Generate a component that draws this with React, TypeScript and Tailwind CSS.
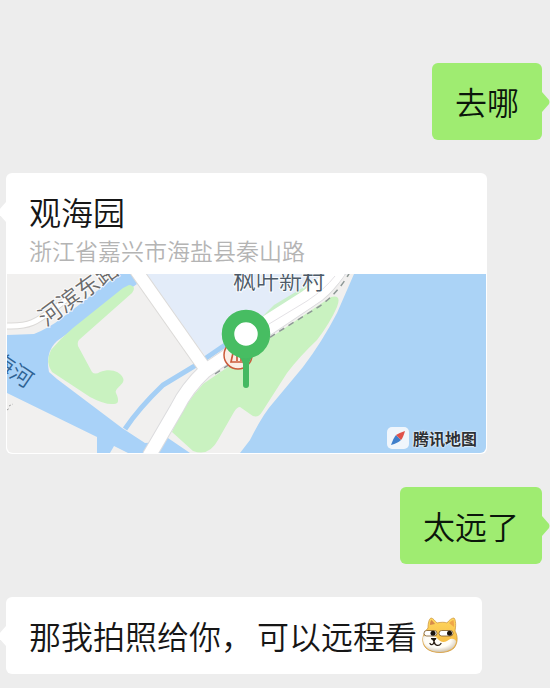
import React from "react";

const DogeIcon = () => (
  <svg className="h-[38px] w-[38px] shrink-0" viewBox="0 0 38 38" role="img" aria-label="doge">
    <defs>
      <linearGradient id="fur" x1="0" y1="0" x2="0" y2="1">
        <stop offset="0" stopColor="#ffd75e" />
        <stop offset="1" stopColor="#f2b23c" />
      </linearGradient>
      <radialGradient id="face" cx="0.45" cy="0.35" r="0.65">
        <stop offset="0.6" stopColor="#fffdf7" />
        <stop offset="1" stopColor="#cfc4b2" />
      </radialGradient>
    </defs>
    <path
      d="M7 11 C7 6 8 2 10 1 C12 1 14 4 16 6 C20 5 24 5 26 6 C28 3 31 1 33 1 C35 3 35 9 34 14 C37 19 37 26 33 31 C27 37 11 37 5 31 C0 26 1 17 7 11Z"
      fill="url(#fur)"
      stroke="#cf9a45"
      strokeWidth="0.8"
    />
    <path d="M9 8 C9 5 10 3 10.500 3 C12 4 13 6 14 7Z" fill="#d68a4a" />
    <path d="M28 6 C30 4 32 3 32.500 3 C33 5 33 8 33 10Z" fill="#f0a64a" />
    <path
      d="M2 20 C6 15 12 19 15 20 C19 25 22 26 26 24 C31 20 34 22 35 24 C35 29 30 35 19 35 C8 35 1 29 2 20Z"
      fill="url(#face)"
    />
    <rect x="3" y="13.500" width="13" height="5.500" rx="2.700" fill="#fff" stroke="#7b5726" strokeWidth="0.8" />
    <rect x="18" y="13.500" width="14" height="5.500" rx="2.700" fill="#fff" stroke="#7b5726" strokeWidth="0.8" />
    <circle cx="12" cy="16.300" r="2.500" fill="#19120c" />
    <circle cx="28.500" cy="16.300" r="2.500" fill="#19120c" />
    <path d="M10 21.500 H15 L13 24Z" fill="#19120c" stroke="#19120c" strokeLinejoin="round" />
    <path
      d="M13 24 C13 28 10 28.500 9 26.500 M13 24.500 C14 29 18 29.500 20 26.500"
      fill="none"
      stroke="#2a1e14"
      strokeWidth="1.300"
      strokeLinecap="round"
    />
  </svg>
);

const MapView = () => (
  <svg
    className="block h-[179px] w-full rounded-b-md bg-[#f1f0ef]"
    viewBox="0 0 479 179"
    preserveAspectRatio="xMidYMid slice"
    fontFamily="'Noto Sans CJK SC', sans-serif"
    role="img"
    aria-label="地图"
  >
    {/* blocks and water */}
    <path d="M134 0 L200 84 L216 69 L340 0Z" fill="#e3ecf9" />
    <path d="M254 44 L267 31 L312 4 L320 10 L264 50Z" fill="#c9efc9" />
    <path
      d="M0 61 L27 60 Q42 54 55 44 L112 0 H124 L130 10 L50 67 Q38 78 42 98 L50 105 L115 154 L138 169 L153 168 L158 162 L183 179 H90 V163 L0 119Z"
      fill="#a9d2f8"
    />
    <path d="M103 179 L107 172 L121 179Z" fill="#f1f0ef" />
    <path d="M347 0 L330 39 Q315 68 296 93 L266 129 Q256 140 243 166 L233 179 H479 V0Z" fill="#abd3f6" />
    <path d="M118 155 Q132 134 156 111 L186 93 L218 71" fill="none" stroke="#a5cff5" strokeWidth="5" />

    {/* parks */}
    <path
      d="M122 11 Q130 12 125 19 L73 65 Q70 67 71 72 L85 98 Q88 101 93 98 C103 94 113 97 116 104 C119 110 107 114 109 119 Q114 130 107 130 Q98 131 83 123 L45 98 Q38 88 44 76 Q54 64 66 54 L116 14Z"
      fill="#c9f2c0"
    />
    <path
      d="M165 158 Q174 134 196 110 L266 62 L324 23 Q335 20 330 33 Q323 49 310 66 Q293 82 280 99 L255 138 Q250 146 243 140 L233 133 Q230 133 227 138 L211 166 Q202 183 186 177Z"
      fill="#c9f2c0"
    />

    {/* roads */}
    <g fill="none" strokeLinejoin="round">
      <path d="M0 52 C26 53 30 47 60 25" stroke="#dcdad8" strokeWidth="7" />
      <path d="M128 -5 L197 93" stroke="#dcdad8" strokeWidth="14" />
      <path d="M142 182 L170 134 Q180 114 198 97 L260 55 L312 20 Q322 12 334 -6" stroke="#dcdcde" strokeWidth="15" />
      <path d="M0 52 C26 53 30 47 60 25" stroke="#fff" strokeWidth="5" />
      <path d="M128 -5 L197 93" stroke="#fff" strokeWidth="12" />
      <path d="M142 182 L170 134 Q180 114 198 97 L260 55 L312 20 Q322 12 334 -6" stroke="#fff" strokeWidth="13" />
      <path d="M256 53 L300 25 Q318 13 330 -4" stroke="#fff" strokeWidth="18" />
      <path d="M262 50 L300 27 Q318 15 328 2" stroke="#e4e2e6" strokeWidth="1" />
      <path d="M208 100 L268 60 L313 32 Q332 18 343 -2" stroke="#8e9896" strokeWidth="1.500" strokeDasharray="6 5" />
    </g>

    {/* labels */}
    <g stroke="#fff" strokeOpacity="0.8" strokeWidth="2" paintOrder="stroke" fontSize="23">
      <text transform="translate(39 53) rotate(-36)" fill="#6b6b6b">
        河滨东路
      </text>
      <text x="226" y="15" fill="#4d5a68">
        枫叶新村
      </text>
    </g>
    <text transform="translate(-17 90) rotate(34)" fontSize="22" fill="#2f6293">
      海河
    </text>
    <path d="M0 136 L3 134 M2 132 L6 130" stroke="#9a9a9a" strokeWidth="1" strokeDasharray="2 2" />

    {/* hot spring */}
    <circle cx="231" cy="81" r="14" fill="#fbeee6" stroke="#cb5a3a" strokeWidth="1.500" />
    <path d="M226 79 L224 88 H240 L238 79 M230 79 V87 M234 79 V87" fill="none" stroke="#cb5a3a" strokeWidth="1.700" />

    {/* pin */}
    <path d="M239 80 V111" stroke="#44b961" strokeWidth="6" strokeLinecap="round" />
    <path d="M228 80 Q235 84 236 90 H242 Q243 84 250 80Z" fill="#44b961" />
    <circle cx="239" cy="60" r="18" fill="#fff" stroke="#47bd62" strokeWidth="12.500" />
  </svg>
);

const TencentBadge = () => (
  <div className="absolute right-2.5 bottom-1 flex items-center gap-1">
    <svg className="h-[22px] w-[22px]" viewBox="0 0 22 22" aria-hidden="true">
      <rect width="22" height="22" rx="5" fill="#f0f6fc" />
      <path d="M4 18 Q7 10 9 8 L14 13 Q11 16 4 18Z" fill="#3f7fcb" />
      <path d="M18 4 Q16 11 14 13 L9 8 Q12 6 18 4Z" fill="#e0524a" />
    </svg>
    <span className="text-base leading-6 font-bold text-[#2d3136] [text-shadow:0_0_2px_#fff,0_0_2px_#fff]">
      腾讯地图
    </span>
  </div>
);

const LeftTail = () => (
  <svg className="absolute top-[27px] -left-2 h-6 w-2" viewBox="0 0 8 24" aria-hidden="true">
    <path d="M8 2 L1 10 Q0 12 1 14 L8 22Z" fill="#fff" />
  </svg>
);

const RightTail = () => (
  <svg className="absolute top-[27px] -right-2 h-6 w-2" viewBox="0 0 8 24" aria-hidden="true">
    <path d="M0 2 L7 10 Q8 12 7 14 L0 22Z" fill="#9fec71" />
  </svg>
);

const SentMessage = ({ text }: { text: string }) => (
  <div className="relative self-end rounded-md bg-[#9fec71] px-[23px] py-4 text-[32px] leading-[45px] text-[#0b160b]">
    {text}
    <RightTail />
  </div>
);

const App = () => {
  return (
    <main className="flex min-h-screen flex-col items-start gap-[33px] overflow-hidden bg-[#ededed] pt-[63px] pr-2 pb-3 pl-1.5 font-['Noto_Sans_CJK_SC',sans-serif] font-[350]">
      <SentMessage text="去哪" />

      <div className="relative w-full max-w-[481px] rounded-md bg-white">
        <LeftTail />
        <div className="px-[23px] pt-4 pb-[7px]">
          <h2 className="text-[32px] leading-[45px] text-[#161616]">观海园</h2>
          <p className="text-[23px] leading-8 text-[#b4b4b4]">浙江省嘉兴市海盐县秦山路</p>
        </div>
        <div className="relative p-px">
          <MapView />
          <TencentBadge />
        </div>
      </div>

      <SentMessage text="太远了" />

      <div className="relative flex items-center gap-1 rounded-md bg-white px-[23px] py-4 text-[32px] leading-[45px] text-[#161616]">
        <LeftTail />
        <span>那我拍照给你，</span>
        <span>可以远程看</span>
        <DogeIcon />
      </div>
    </main>
  );
};

export default App;
